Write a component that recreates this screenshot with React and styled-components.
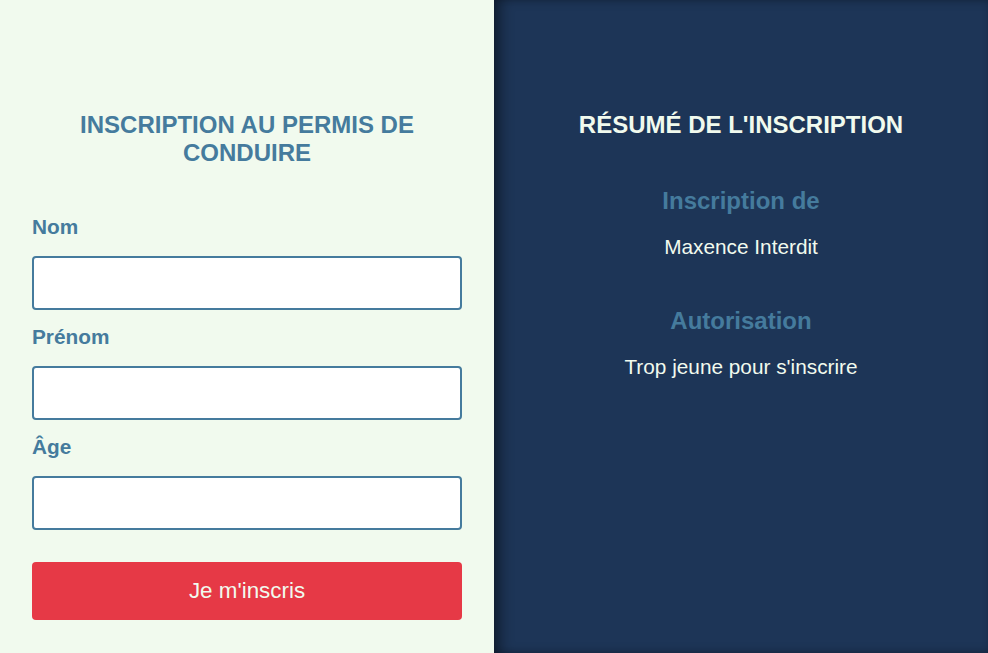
import React from 'react';
import styled, { createGlobalStyle } from 'styled-components';

const GlobalStyle = createGlobalStyle`
	html, body {
		margin: 0;
		padding: 0;
		height: 100%;
	}
	body {
		font-family: "Liberation Sans", Arial, sans-serif;
	}
	#root {
		height: 100%;
	}
`;

const Page = styled.div`
	display: grid;
	grid-template-columns: 1fr 1fr;
	height: 100vh;
	overflow: hidden;
`;

const FormPanel = styled.section`
	background-color: #f1faee;
	padding: 111px 32px 0;
	color: #457b9d;
`;

const Title = styled.h1`
	margin: 0;
	font-size: 24px;
	line-height: 28px;
	font-weight: 700;
	text-align: center;
	text-transform: uppercase;
	color: ${props => props.light ? '#f1faee' : '#457b9d'};
`;

const Form = styled.form`
	display: flex;
	flex-direction: column;
	margin-top: 49px;
`;

const Label = styled.label`
	display: block;
	font-size: 20.8px;
	line-height: 22px;
	font-weight: 700;
	margin-bottom: 18px;
`;

const Input = styled.input`
	box-sizing: border-box;
	width: 100%;
	height: 54px;
	margin: 0 0 16px;
	padding: 0 12px;
	border: 2px solid #457b9d;
	border-radius: 4px;
	background-color: #fff;
	font-family: inherit;
	font-size: 18px;
	outline: none;
`;

const Button = styled.button`
	height: 58px;
	margin-top: 16px;
	border: none;
	border-radius: 4px;
	background-color: #e63946;
	color: #f1faee;
	font-family: inherit;
	font-size: 22.4px;
	cursor: pointer;
`;

const SummaryPanel = styled.section`
	background-color: #1d3557;
	padding: 111px 32px 0;
	box-shadow: inset 10px 0 14px -4px rgba(0,0,0,0.45), inset 0 0 6px rgba(0,0,0,0.15);
	text-align: center;
`;

const Block = styled.div`
	margin-top: 48px;
`;

const BlockTitle = styled.h2`
	margin: 0;
	font-size: 24px;
	line-height: 28px;
	font-weight: 700;
	color: #457b9d;
`;

const BlockValue = styled.p`
	margin: 20px 0 0;
	font-size: 20.8px;
	line-height: 24px;
	color: #f1faee;
`;

const fields = [
	{ id: 'nom', label: 'Nom' },
	{ id: 'prenom', label: 'Prénom' },
	{ id: 'age', label: 'Âge' },
];

const summary = [
	{ title: 'Inscription de', value: 'Maxence Interdit' },
	{ title: 'Autorisation', value: "Trop jeune pour s'inscrire" },
];

const App = () => (
	<Page>
		<GlobalStyle />
		<FormPanel>
			<Title>Inscription au permis de conduire</Title>
			<Form onSubmit={e => e.preventDefault()}>
				{fields.map(f => (
					<div key={f.id}>
						<Label htmlFor={f.id}>{f.label}</Label>
						<Input id={f.id} type={f.id === 'age' ? 'number' : 'text'} />
					</div>
				))}
				<Button type="submit">Je m'inscris</Button>
			</Form>
		</FormPanel>
		<SummaryPanel>
			<Title light>Résumé de l'inscription</Title>
			{summary.map((s, index) => (
				<Block key={`Sum-${index}`}>
					<BlockTitle>{s.title}</BlockTitle>
					<BlockValue>{s.value}</BlockValue>
				</Block>
			))}
		</SummaryPanel>
	</Page>
);

export default App;
